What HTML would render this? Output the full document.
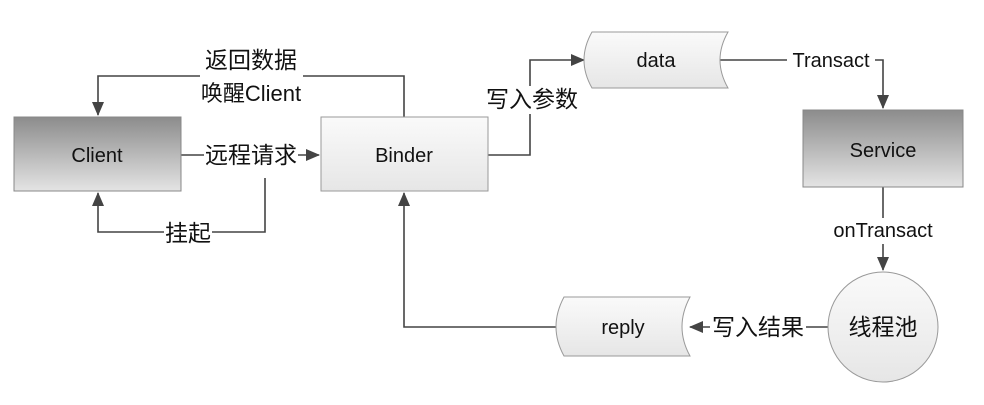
<!DOCTYPE html>
<html><head><meta charset="utf-8"><style>
body{margin:0;background:#fff}
svg text{font-family:"Liberation Sans","Noto Sans CJK SC",sans-serif;fill:#111}
</style></head><body>
<svg width="984" height="400" viewBox="0 0 984 400" xmlns="http://www.w3.org/2000/svg">
<defs>
<linearGradient id="dk" x1="0" y1="0" x2="0" y2="1"><stop offset="0" stop-color="#8c8c8c"/><stop offset="1" stop-color="#e4e4e4"/></linearGradient>
<linearGradient id="lt" x1="0" y1="0" x2="0" y2="1"><stop offset="0" stop-color="#fafafa"/><stop offset="1" stop-color="#e6e6e6"/></linearGradient>
<marker id="a" markerWidth="14" markerHeight="14" refX="13" refY="7" orient="auto" markerUnits="userSpaceOnUse"><path d="M0,1 L14,7 L0,13 z" fill="#444"/></marker>
</defs>
<g stroke="#444" stroke-width="1.6" fill="none">
<path d="M404,117 V76 H98 V115" marker-end="url(#a)"/>
<path d="M181,155 H319" marker-end="url(#a)"/>
<path d="M265,178 V232 H98 V193" marker-end="url(#a)"/>
<path d="M488,155 H530 V60 H584" marker-end="url(#a)"/>
<path d="M718,60 H883 V108" marker-end="url(#a)"/>
<path d="M883,187 V270" marker-end="url(#a)"/>
<path d="M828,327 H690" marker-end="url(#a)"/>
<path d="M557,327 H404 V193" marker-end="url(#a)"/>
</g>
<rect x="14" y="117" width="167" height="74" fill="url(#dk)" stroke="#888"/>
<rect x="321" y="117" width="167" height="74" fill="url(#lt)" stroke="#999"/>
<rect x="803" y="110" width="160" height="77" fill="url(#dk)" stroke="#888"/>
<path d="M592,32 H728 Q712,60 728,88 H592 Q576,60 592,32 z" fill="url(#lt)" stroke="#999"/>
<path d="M564,297 H690 Q674,327 690,356 H564 Q548,327 564,297 z" fill="url(#lt)" stroke="#999"/>
<circle cx="883" cy="327" r="55" fill="url(#lt)" stroke="#999"/>
<g font-size="20">
<rect x="200" y="44" width="103" height="64" fill="#fff"/>
<text x="251" y="68" text-anchor="middle" font-size="23">返回数据</text>
<text x="251" y="101" text-anchor="middle" font-size="22">唤醒Client</text>
<text x="97" y="162" text-anchor="middle">Client</text>
<rect x="204" y="142" width="94" height="26" fill="#fff"/>
<text x="251" y="163" text-anchor="middle" font-size="23">远程请求</text>
<rect x="164" y="220" width="48" height="26" fill="#fff"/>
<text x="188" y="241" text-anchor="middle" font-size="23">挂起</text>
<text x="404" y="162" text-anchor="middle">Binder</text>
<rect x="484" y="86" width="96" height="28" fill="#fff"/>
<text x="532" y="107" text-anchor="middle" font-size="23">写入参数</text>
<text x="656" y="67" text-anchor="middle">data</text>
<rect x="787" y="48" width="88" height="24" fill="#fff"/>
<text x="831" y="67" text-anchor="middle">Transact</text>
<text x="883" y="157" text-anchor="middle">Service</text>
<rect x="830" y="218" width="106" height="26" fill="#fff"/>
<text x="883" y="237" text-anchor="middle">onTransact</text>
<text x="883" y="335" text-anchor="middle" font-size="23">线程池</text>
<rect x="710" y="314" width="96" height="26" fill="#fff"/>
<text x="758" y="335" text-anchor="middle" font-size="23">写入结果</text>
<text x="623" y="334" text-anchor="middle">reply</text>
</g>
</svg>
</body></html>
